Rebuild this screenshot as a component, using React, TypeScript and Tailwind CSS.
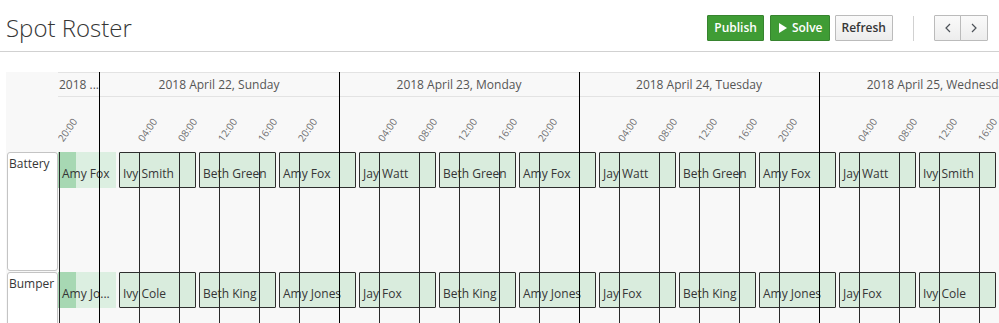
import React from "react";

const battery = ["Ivy Smith", "Beth Green", "Amy Fox", "Jay Watt", "Beth Green", "Amy Fox", "Jay Watt", "Beth Green", "Amy Fox", "Jay Watt", "Ivy Smith"];
const bumper = ["Ivy Cole", "Beth King", "Amy Jones", "Jay Fox", "Beth King", "Amy Jones", "Jay Fox", "Beth King", "Amy Jones", "Jay Fox", "Ivy Cole"];

const days = ["2018 April 22, Sunday", "2018 April 23, Monday", "2018 April 24, Tuesday", "2018 April 25, Wednesday"];

const minorHours: number[] = [-4];
for (let d = 0; d < 4; d++) for (const h of [4, 8, 12, 16, 20]) minorHours.push(d * 24 + h);
const majorHours = [0, 24, 48, 72];

const lineX = (h: number) => 41 + 10 * h;
const pad = (n: number) => (n < 10 ? "0" + n : "" + n);
const labelFor = (h: number) => pad(((h % 24) + 24) % 24) + ":00";

function Row({ names, first }: { names: string[]; first: string }) {
  return (
    <div className="relative h-[120px]">
      <div className="absolute left-0 top-0 flex h-[36px] w-[58px] overflow-hidden bg-[#dcefe1]">
        <div className="absolute left-0 top-0 h-full w-[18px] bg-[#a7d8b3]" />
        <span className="relative pl-[4px] pt-[14px] text-[12px] leading-[16px] text-[#363636] whitespace-nowrap">{first}</span>
      </div>
      {names.map((n, i) => (
        <div
          key={i}
          className="absolute top-0 h-[36px] w-[77px] overflow-hidden whitespace-nowrap rounded-[1px] border border-[#2e2e2e] bg-[#d9ecdd] pl-[3px] pt-[13px] text-[12px] leading-[16px] text-[#363636]"
          style={{ left: 61 + 80 * i }}
        >
          {n}
        </div>
      ))}
    </div>
  );
}

function Chevron({ dir }: { dir: "l" | "r" }) {
  return (
    <svg width="6" height="10" viewBox="0 0 6 10" fill="none">
      <path d={dir === "l" ? "M5 1L1 5L5 9" : "M1 1L5 5L1 9"} stroke="#4d5258" strokeWidth="1.2" />
    </svg>
  );
}

export default function App() {
  return (
    <div className="h-[323px] w-[999px] overflow-hidden bg-white font-['Open_Sans','Noto_Sans',sans-serif]">
      {/* Header */}
      <div className="flex h-[52px] items-start justify-between border-b border-[#d1d1d1] pl-[6px] pr-[11px]">
        <h1 className="mt-[12px] text-[24px] font-light leading-[32px] text-[#363636]">Spot Roster</h1>
        <div className="mt-[15px] flex items-center">
          <button className="h-[26px] rounded-[1px] border border-[#37842f] bg-[#3f9c35] px-[6px] text-[12px] font-semibold leading-[20px] text-white">
            Publish
          </button>
          <button className="ml-[6px] flex h-[26px] items-center gap-[5px] rounded-[1px] border border-[#37842f] bg-[#3f9c35] pl-[8px] pr-[6px] text-[12px] font-semibold leading-[20px] text-white">
            <svg width="8" height="10" viewBox="0 0 8 10">
              <polygon points="0,0 8,5 0,10" fill="white" />
            </svg>
            Solve
          </button>
          <button className="ml-[5px] h-[26px] rounded-[1px] border border-[#bbbbbb] bg-gradient-to-b from-[#fafafa] to-[#ededed] px-[6px] text-[12px] font-semibold leading-[20px] text-[#363636]">
            Refresh
          </button>
          <div className="mx-[20px] h-[25px] w-px bg-[#d1d1d1]" />
          <div className="flex">
            <button className="flex h-[26px] w-[27px] items-center justify-center rounded-l-[1px] border border-[#bbbbbb] bg-gradient-to-b from-[#fafafa] to-[#ededed]">
              <Chevron dir="l" />
            </button>
            <button className="-ml-px flex h-[26px] w-[28px] items-center justify-center rounded-r-[1px] border border-[#bbbbbb] bg-gradient-to-b from-[#fafafa] to-[#ededed]">
              <Chevron dir="r" />
            </button>
          </div>
        </div>
      </div>

      {/* Timeline */}
      <div className="ml-[6px] mt-[20px] flex h-[251px] bg-[#f8f8f8]">
        <div className="w-[52px] shrink-0">
          <div className="h-[80px]" />
          <div className="mb-px ml-px h-[119px] w-[51px] rounded-[3px] border border-[#c4c4c4] bg-white pl-px pt-[3px] text-[12px] leading-[16px] text-[#363636]">
            Battery
          </div>
          <div className="ml-px h-[119px] w-[51px] rounded-[3px] border border-[#c4c4c4] bg-white pl-px pt-[3px] text-[12px] leading-[16px] text-[#363636]">
            Bumper
          </div>
        </div>

        <div className="relative min-w-0 flex-1 overflow-hidden">
          <div className="flex h-[25px] border-y border-[#e3e3e3] text-[12px] leading-[23px] text-[#555555]">
            <div className="w-[41px] shrink-0 overflow-hidden whitespace-nowrap pl-px">2018 ...</div>
            {days.map((d) => (
              <div key={d} className="w-[240px] shrink-0 whitespace-nowrap text-center">
                {d}
              </div>
            ))}
          </div>
          <div className="relative h-[55px]">
            {minorHours.map((h) => (
              <span
                key={h}
                className="absolute top-[36px] origin-bottom-left -rotate-[55deg] whitespace-nowrap text-[10px] leading-[10px] text-[#6f6f6f]"
                style={{ left: lineX(h) + 5 }}
              >
                {labelFor(h)}
              </span>
            ))}
          </div>

          <Row names={battery} first="Amy Fox" />
          <Row names={bumper} first="Amy Jo..." />

          {minorHours.map((h) => (
            <div key={"m" + h} className="absolute bottom-0 top-[80px] w-px bg-[#2a2a2a]" style={{ left: lineX(h) }} />
          ))}
          {majorHours.map((h) => (
            <div key={"M" + h} className="absolute bottom-0 top-0 w-px bg-black" style={{ left: lineX(h) }} />
          ))}
        </div>
      </div>
    </div>
  );
}
